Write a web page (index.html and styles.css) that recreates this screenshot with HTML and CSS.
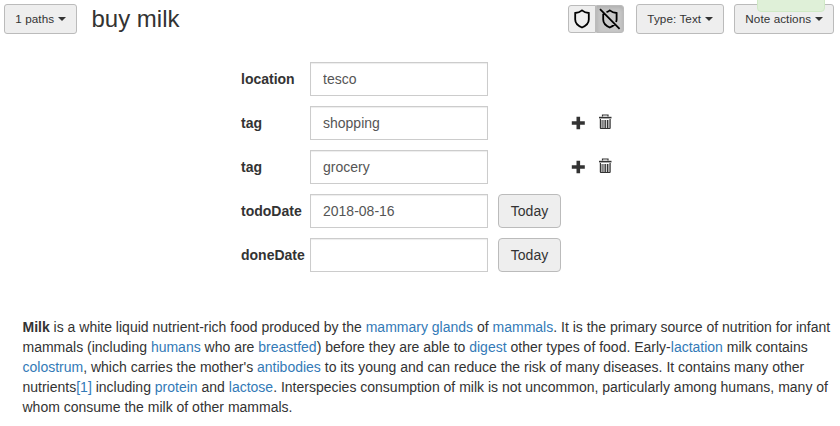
FILE: index.html
```html
<!DOCTYPE html>
<html lang="en">
<head>
<meta charset="utf-8">
<title>buy milk</title>
<link rel="stylesheet" href="styles.css">
</head>
<body>
<header class="title-bar">
  <button class="btn btn-sm paths">1 paths<span class="caret"></span></button>
  <h1 class="title">buy milk</h1>
  <div class="protect">
    <button class="btn btn-icon" aria-label="Protect">
      <svg width="18" height="20" viewBox="0 0 18 20"><path d="M9 1.4C7 3 4.500 3.800 2.200 4V10.500C2.200 14.500 5.500 17 9 18.500C12.500 17 15.800 14.500 15.800 10.500V4C13.500 3.800 11 3 9 1.400Z"/></svg>
    </button>
    <button class="btn btn-icon active" aria-label="Unprotect">
      <svg width="22" height="22" viewBox="0 0 22 22"><path d="M4.200 5.800V11.500C4.200 15.500 7.300 18 10.800 19.500C12.600 18.700 14.200 17.700 15.500 16.500M7.500 4.200C8.800 3.800 9.800 3.200 10.800 2.400C12.800 4 15.300 4.800 17.600 5V11.500C17.600 12.400 17.400 13.200 17.100 14M1 1.200L20.600 20.800"/></svg>
    </button>
  </div>
  <button class="btn btn-sm type">Type: Text<span class="caret"></span></button>
  <button class="btn btn-sm actions">Note actions<span class="caret"></span></button>
</header>
<div class="toast"></div>

<form class="attributes">
  <label for="location">location</label><input id="location" value="tesco"><span></span>
  <label for="tag1">tag</label><input id="tag1" value="shopping">
  <div class="tools">
    <svg width="14" height="14" viewBox="0 0 14 14"><path d="M5.500 .8h3.600v4.400h4.700v3.600H9.100v4.400H5.500V8.800H.8V5.200h4.700z"/></svg>
    <svg class="trash" width="14" height="16" viewBox="0 0 14 16"><path d="M4.500 2.500V1h5.500v1.500" fill="none" stroke="#333" stroke-width="1.2"/><path d="M1 2.800h12.500V4H1z"/><path class="soft" d="M1 4h12.500v1H1zM3 6h1.500v8H3zM10 6h1.500v8H10zM6 6h2.500v8H6z"/><path d="M1.800 5h1.200v9h8.500V5h1.200v9q0 1-1 1H2.800q-1 0-1-1zM4.500 6h1v8h-1zM6.800 6h1v8h-1zM9 6h1v8H9z"/></svg>
  </div>
  <label for="tag2">tag</label><input id="tag2" value="grocery">
  <div class="tools">
    <svg width="14" height="14" viewBox="0 0 14 14"><path d="M5.500 .8h3.600v4.400h4.700v3.600H9.100v4.400H5.500V8.800H.8V5.200h4.700z"/></svg>
    <svg class="trash" width="14" height="16" viewBox="0 0 14 16"><path d="M4.500 2.500V1h5.500v1.500" fill="none" stroke="#333" stroke-width="1.2"/><path d="M1 2.800h12.500V4H1z"/><path class="soft" d="M1 4h12.500v1H1zM3 6h1.500v8H3zM10 6h1.500v8H10zM6 6h2.500v8H6z"/><path d="M1.800 5h1.200v9h8.500V5h1.200v9q0 1-1 1H2.800q-1 0-1-1zM4.500 6h1v8h-1zM6.800 6h1v8h-1zM9 6h1v8H9z"/></svg>
  </div>
  <label for="todo">todoDate</label><input id="todo" value="2018-08-16"><button type="button" class="btn today">Today</button>
  <label for="done">doneDate</label><input id="done" value=""><button type="button" class="btn today">Today</button>
</form>

<p class="note"><strong>Milk</strong> is a white liquid nutrient-rich food produced by the <a href="#">mammary glands</a> of <a href="#">mammals</a>. It is the primary source of nutrition for infant mammals (including <a href="#">humans</a> who are <a href="#">breastfed</a>) before they are able to <a href="#">digest</a> other types of food. Early-<a href="#">lactation</a> milk contains <a href="#">colostrum</a>, which carries the mother's <a href="#">antibodies</a> to its young and can reduce the risk of many diseases. It contains many other nutrients<a href="#">[1]</a> including <a href="#">protein</a> and <a href="#">lactose</a>. Interspecies consumption of milk is not uncommon, particularly among humans, many of whom consume the milk of other mammals.</p>
</body>
</html>
```
FILE: styles.css
```css
* { box-sizing: border-box; }
body {
  margin: 0;
  height: 426px;
  overflow: hidden;
  background: #fff;
  color: #333;
  font: 14px/20px "Liberation Sans", Arial, sans-serif;
}
.title-bar {
  display: flex;
  align-items: flex-start;
  padding: 4px 6px 0 4px;
  height: 62px;
}
.btn {
  border: 1px solid #bbb;
  border-radius: 4px;
  background: #eee;
  color: #333;
  font: inherit;
  padding: 0;
  white-space: nowrap;
}
.btn-sm {
  display: flex;
  align-items: center;
  justify-content: center;
  height: 30px;
  font-size: 11.7px;
  letter-spacing: .07px;
  border-radius: 3px;
}
.paths { width: 73px; }
.type { width: 88px; margin-right: 10px; }
.actions { width: 100px; }
.caret {
  margin-left: 3.5px;
  border-top: 4px solid #333;
  border-left: 4px solid transparent;
  border-right: 4px solid transparent;
}
.title {
  margin: 0 auto 0 14.5px;
  font-size: 24px;
  font-weight: 400;
  line-height: 30px;
}
.protect { display: flex; margin: 1px 12px 0 0; }
.btn-icon {
  display: flex;
  align-items: center;
  justify-content: center;
  width: 28px;
  height: 28px;
  border-radius: 3px 0 0 3px;
}
.btn-icon svg { flex: none; fill: none; stroke: #000; stroke-width: 1.8; }
.btn-icon.active {
  border-radius: 0 3px 3px 0;
  border-color: #bbb;
  background: #c8c8c8;
  box-shadow: inset 0 2px 4px rgba(0, 0, 0, .13);
}
.toast {
  position: absolute;
  top: -8px;
  left: 757px;
  width: 68px;
  height: 20px;
  border: 1px solid #d0e9c6;
  border-radius: 4px;
  background: #dff0d8;
}
.attributes {
  display: grid;
  grid-template-columns: 69px 178px 130px;
  grid-auto-rows: 34px;
  row-gap: 10px;
  align-items: center;
  margin-left: 241px;
}
.attributes label { font-weight: 700; }
.attributes input {
  width: 178px;
  height: 34px;
  padding: 6px 12px;
  border: 1px solid #ccc;
  border-radius: 0;
  background: #fff;
  color: #555;
  font: inherit;
  box-shadow: inset 0 1px 1px rgba(0, 0, 0, .075);
}
.today { width: 63px; height: 34px; margin-left: 10px; }
.tools { display: flex; align-items: center; gap: 13px; margin-left: 83px; }
.tools svg { fill: #333; }
.tools .trash { margin-bottom: 2px; }
.tools .soft { fill: #aaa; }
.note { margin: 45px 0 0 22.5px; width: 812px; }
.note a { color: #337ab7; text-decoration: none; }
```
